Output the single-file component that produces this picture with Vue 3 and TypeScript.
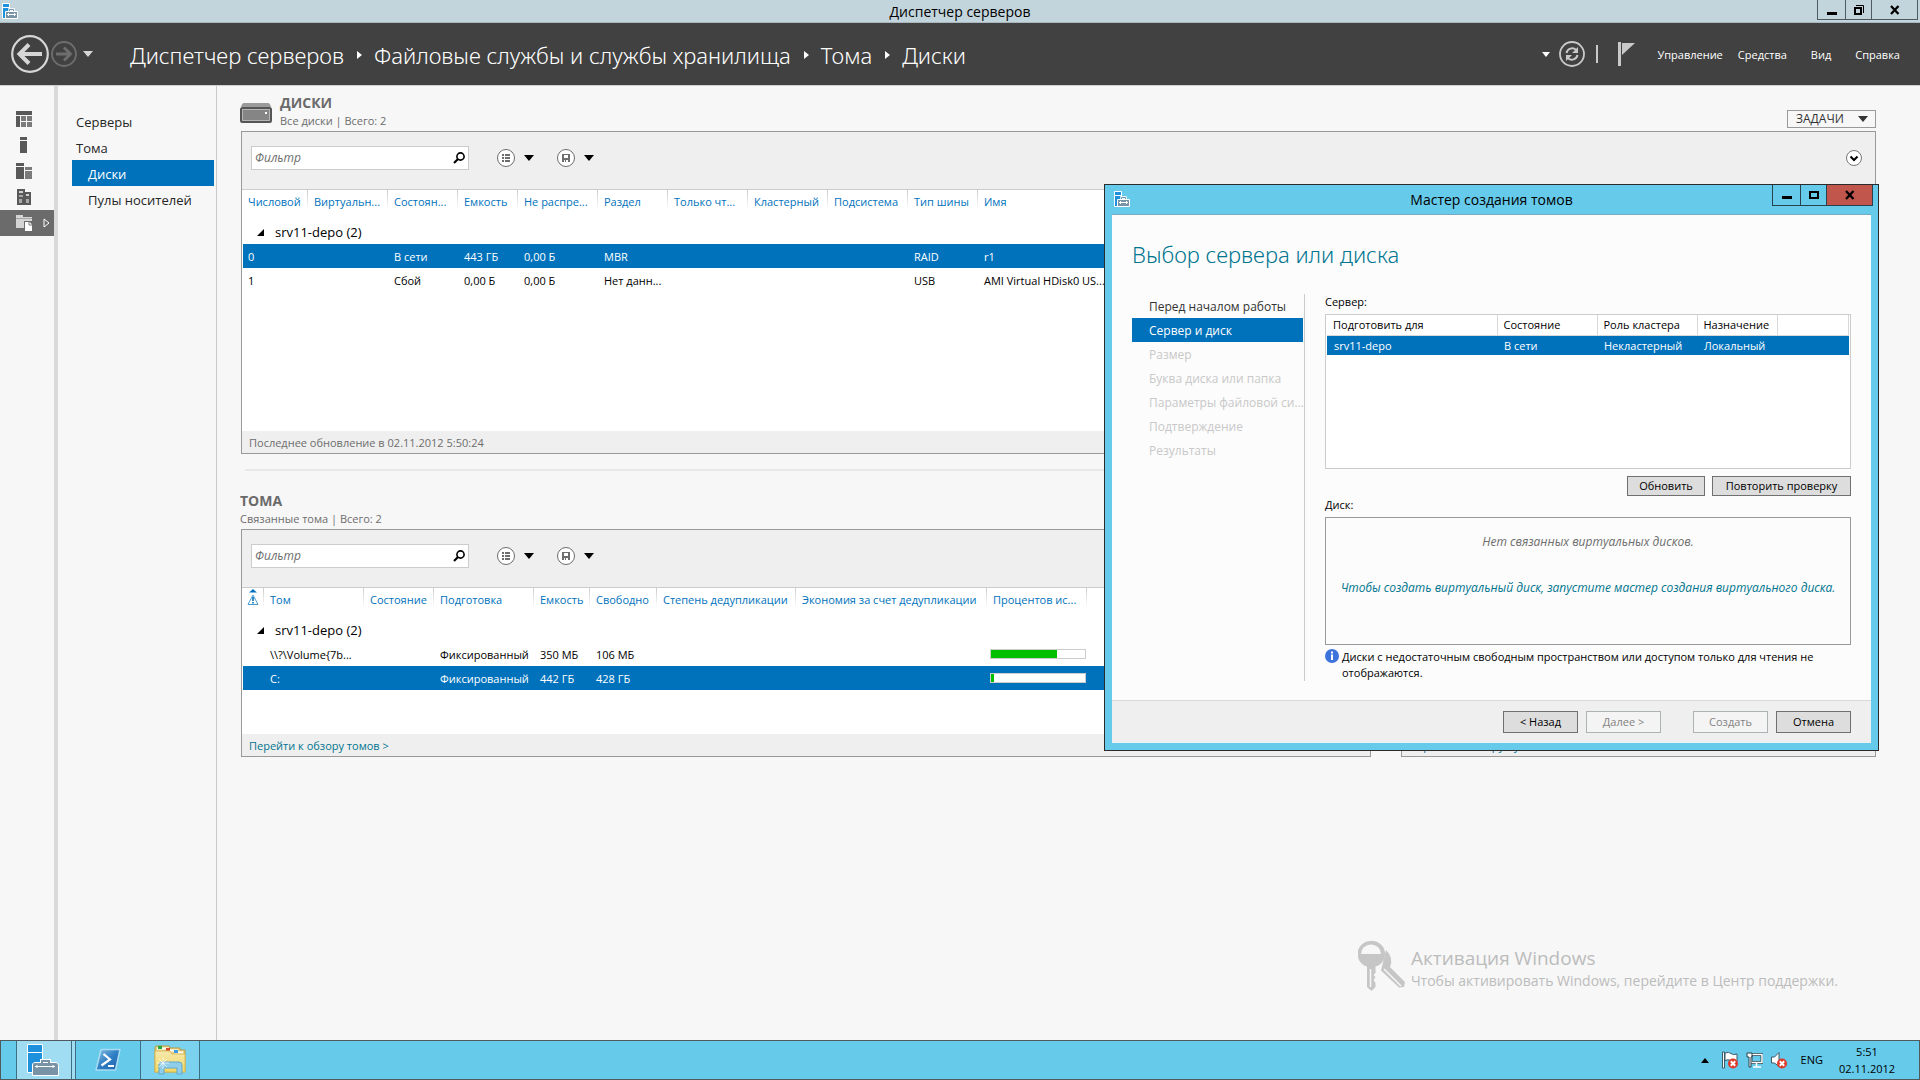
<script setup lang="ts">
interface Column {
  label: string
  width?: number
  warn?: boolean
}

const crumbs = ['Диспетчер серверов', 'Файловые службы и службы хранилища', 'Тома', 'Диски']
const menus = ['Управление', 'Средства', 'Вид', 'Справка']

const diskColumns: Column[] = [
  { label: 'Числовой', width: 65 },
  { label: 'Виртуальн...', width: 80 },
  { label: 'Состоян...', width: 70 },
  { label: 'Емкость', width: 60 },
  { label: 'Не распре...', width: 80 },
  { label: 'Раздел', width: 70 },
  { label: 'Только чт...', width: 80 },
  { label: 'Кластерный', width: 80 },
  { label: 'Подсистема', width: 80 },
  { label: 'Тип шины', width: 70 },
  { label: 'Имя' },
]
const diskRows = [
  { selected: true, cells: ['0', '', 'В сети', '443 ГБ', '0,00 Б', 'MBR', '', '', '', 'RAID', 'r1'] },
  { selected: false, cells: ['1', '', 'Сбой', '0,00 Б', '0,00 Б', 'Нет данн...', '', '', '', 'USB', 'AMI Virtual HDisk0 US...'] },
]

const volumeColumns: Column[] = [
  { label: '', width: 21, warn: true },
  { label: 'Том', width: 100 },
  { label: 'Состояние', width: 70 },
  { label: 'Подготовка', width: 100 },
  { label: 'Емкость', width: 56 },
  { label: 'Свободно', width: 67 },
  { label: 'Степень дедупликации', width: 139 },
  { label: 'Экономия за счет дедупликации', width: 191 },
  { label: 'Процентов ис...', width: 100 },
  { label: '' },
]
const volumeRows = [
  { selected: false, used: 70, cells: ['', '\\\\?\\Volume{7b...', '', 'Фиксированный', '350 МБ', '106 МБ', '', ''] },
  { selected: true, used: 3, cells: ['', 'C:', '', 'Фиксированный', '442 ГБ', '428 ГБ', '', ''] },
]

const steps = [
  { label: 'Перед началом работы', state: 'done' },
  { label: 'Сервер и диск', state: 'current' },
  { label: 'Размер', state: 'off' },
  { label: 'Буква диска или папка', state: 'off' },
  { label: 'Параметры файловой си...', state: 'off' },
  { label: 'Подтверждение', state: 'off' },
  { label: 'Результаты', state: 'off' },
]
</script>

<template>
  <div class="desktop">
    <header class="titlebar">
      <svg class="app-icon" width="16" height="16" viewBox="0 0 16 16" aria-hidden="true">
        <path d="M.5.5h7v15h-7z" fill="#1e90dc" stroke="#fff" />
        <path d="M.5 4.5h7" stroke="#fff" />
        <path d="M7.5 8V6.500h4V8" fill="none" stroke="#fff" stroke-width="2.500" />
        <path d="M3.500 8.500h12v7h-12z" fill="#7893a5" stroke="#fff" />
        <path d="M7.500 8V6.500h4V8" fill="none" stroke="#7893a5" />
        <path d="M5 11.500h9M6.500 10v3M12.500 10v3" stroke="#fff" />
      </svg>
      <span class="window-title">Диспетчер серверов</span>
      <div class="window-buttons">
        <button class="wb min" aria-label="Свернуть"><svg width="12" height="12" viewBox="0 0 12 12"><path d="M1 8h10v3H1z" /></svg></button>
        <button class="wb max" aria-label="Восстановить"><svg width="12" height="12" viewBox="0 0 12 12"><path d="M2 4h6v6H2z" fill="none" stroke="#000" stroke-width="2" /><path d="M3 1.500h7.500V9" fill="none" stroke="#000" /></svg></button>
        <button class="wb close" aria-label="Закрыть"><svg width="12" height="12" viewBox="0 0 12 12"><path d="M2 2l7.500 8M9.500 2L2 10" stroke="#000" stroke-width="2.300" /></svg></button>
      </div>
    </header>

    <nav class="band" aria-label="Навигация">
      <button class="plain" aria-label="Назад">
        <svg width="38" height="38" viewBox="0 0 38 38"><circle cx="19" cy="19" r="17.800" fill="none" stroke="#d6d6d6" stroke-width="2.200" /><path d="M31 19H9M18 9.500L8.500 19l9.500 9.500" fill="none" stroke="#d6d6d6" stroke-width="4" /></svg>
      </button>
      <button class="plain forward" aria-label="Вперед">
        <svg width="26" height="26" viewBox="0 0 26 26"><circle cx="13" cy="13" r="12" fill="none" stroke="#6e6e6e" stroke-width="1.800" /><path d="M5 13h14M13 6.500l6.500 6.500-6.500 6.500" fill="none" stroke="#6e6e6e" stroke-width="2.800" /></svg>
      </button>
      <button class="plain recent" aria-label="Последние страницы">
        <svg width="10" height="6" viewBox="0 0 10 6"><path d="M0 0h10L5 6z" fill="#d6d6d6" /></svg>
      </button>
      <ol class="crumbs">
        <li v-for="(crumb, i) in crumbs" :key="crumb">
          <svg v-if="i" width="5" height="8" viewBox="0 0 5 8" aria-hidden="true"><path d="M0 0l5 4-5 4z" fill="#fff" /></svg>
          <a href="#">{{ crumb }}</a>
        </li>
      </ol>
      <button class="plain" aria-label="Параметры обновления">
        <svg width="8" height="5" viewBox="0 0 8 5"><path d="M0 0h8L4 5z" fill="#fff" /></svg>
      </button>
      <button class="plain refresh" aria-label="Обновить данные">
        <svg width="26" height="26" viewBox="0 0 26 26">
          <circle cx="13" cy="13" r="12" fill="none" stroke="#c9c9c9" stroke-width="1.800" />
          <path d="M7.500 12a5.800 5.800 0 0 1 9.500-3.200M18.500 14a5.800 5.800 0 0 1-9.500 3.200" fill="none" stroke="#c9c9c9" stroke-width="2" />
          <path d="M19 6v6h-6zM7 20v-6h6z" fill="#c9c9c9" />
        </svg>
      </button>
      <span class="bar"></span>
      <button class="plain flag" aria-label="Уведомления">
        <svg width="17" height="24" viewBox="0 0 17 24"><path d="M1.500 0v24" stroke="#c9c9c9" stroke-width="3" /><path d="M4 1h13L4 13z" fill="#c9c9c9" /></svg>
      </button>
      <div class="menus">
        <button v-for="menu in menus" :key="menu" class="plain menu">{{ menu }}</button>
      </div>
    </nav>

    <div class="body">
      <nav class="rail" aria-label="Роли">
        <a href="#" aria-label="Панель мониторинга"><svg width="16" height="16" viewBox="0 0 16 16"><path d="M0 0h16v4H0zM0 5h4v11H0z" fill="#595959" /><path d="M5 5h5v5H5zM11 5h5v5h-5zM5 11h5v5H5zM11 11h5v5h-5z" fill="#7b7b7b" /></svg></a>
        <a href="#" aria-label="Локальный сервер"><svg width="16" height="16" viewBox="0 0 16 16"><path d="M4 0h7v3H4zM4 4h7v12H4z" fill="#595959" /></svg></a>
        <a href="#" aria-label="Все серверы"><svg width="16" height="16" viewBox="0 0 16 16"><path d="M0 0h8v3H0zM0 4h8v12H0z" fill="#595959" /><path d="M9 4h7v3H9zM9 8h7v8H9z" fill="#7b7b7b" /></svg></a>
        <a href="#" aria-label="Службы"><svg width="16" height="16" viewBox="0 0 16 16"><path d="M1 0h8v3h6v13H1z" fill="#595959" /><path d="M3 2h4v2H3zM10 5h3v2h-3z" fill="#d0d0d0" /><path d="M3 6h4v2H3zM3 10h3v4H3zM10 10h3v4h-3z" fill="#a8a8a8" /></svg></a>
        <a href="#" class="active" aria-label="Файловые службы и службы хранилища">
          <svg width="16" height="16" viewBox="0 0 16 16"><path d="M0 0h7v2h9v4H8v7H0z" fill="#d4d4d4" /><path d="M0 3.500h16" stroke="#a5a5a5" /><path d="M9 7h4.500L16 9.500V16H9z" fill="#fff" /><path d="M13 7v3h3" fill="none" stroke="#777" /></svg>
          <svg class="expand" width="7" height="10" viewBox="0 0 7 10"><path d="M1 1l5 4-5 4z" fill="none" stroke="#fff" /></svg>
        </a>
      </nav>
      <nav class="pages" aria-label="Разделы">
        <a href="#">Серверы</a>
        <a href="#">Тома</a>
        <a href="#" class="sub current">Диски</a>
        <a href="#" class="sub">Пулы носителей</a>
      </nav>

      <main class="content">
        <section>
          <div class="tile-head">
            <svg width="32" height="20" viewBox="0 0 32 20" aria-hidden="true"><path d="M4 0h24q2 0 3 4H1q1-4 3-4z" fill="#9a9a9a" /><rect x="1" y="5" width="30" height="14" rx="1.500" fill="#b5b5b5" stroke="#555" stroke-width="2" /><path d="M3 7h26v10H3z" fill="#858585" /><path d="M25 9h2v2h-2z" fill="#fff" /></svg>
            <div class="tile-names">
              <h2>ДИСКИ</h2>
              <p>Все диски | Всего: 2</p>
            </div>
            <button class="tasks">ЗАДАЧИ<svg width="10" height="6" viewBox="0 0 10 6"><path d="M0 0h10L5 6z" fill="#333" /></svg></button>
          </div>
          <div class="panel">
            <div class="toolbar">
              <div class="filter">
                <input type="text" placeholder="Фильтр" aria-label="Фильтр дисков" />
                <svg width="12" height="12" viewBox="0 0 12 12" aria-hidden="true"><circle cx="7.500" cy="4.500" r="3.600" fill="none" stroke="#000" stroke-width="1.600" /><path d="M5 7L1 11" stroke="#000" stroke-width="2.200" /></svg>
              </div>
              <button class="plain tool" aria-label="Критерии"><svg width="20" height="20" viewBox="0 0 20 20"><circle cx="10" cy="10" r="8.500" fill="#fff" stroke="#6d6d6d" /><path d="M6 6h2v2H6zM9 6h5v2H9zM6 9h2v2H6zM9 9h5v2H9zM6 12h2v2H6zM9 12h5v2H9z" fill="#6d6d6d" /></svg><svg width="10" height="6" viewBox="0 0 10 6"><path d="M0 0h10L5 6z" /></svg></button>
              <button class="plain tool" aria-label="Сохраненные запросы"><svg width="20" height="20" viewBox="0 0 20 20"><circle cx="10" cy="10" r="8.500" fill="#fff" stroke="#6d6d6d" /><path d="M6 6h8v8H6z" fill="#6d6d6d" /><path d="M8 7h4v3H8zM8 12h1v2H8zM10 12h2v2h-2z" fill="#fff" /></svg><svg width="10" height="6" viewBox="0 0 10 6"><path d="M0 0h10L5 6z" /></svg></button>
              <button class="plain collapse" aria-label="Развернуть критерии"><svg width="18" height="18" viewBox="0 0 18 18"><circle cx="9" cy="9" r="7.500" fill="#fff" stroke="#777" /><path d="M5.500 7.500L9 11l3.500-3.500" fill="none" stroke="#000" stroke-width="2" /></svg></button>
            </div>
            <div class="grid-area tall">
              <table class="grid">
                <colgroup><col v-for="col in diskColumns" :key="col.label" :style="col.width ? { width: col.width + 'px' } : {}" /></colgroup>
                <thead><tr><th v-for="col in diskColumns" :key="col.label" scope="col">{{ col.label }}</th></tr></thead>
                <tbody>
                  <tr class="group"><th colspan="11" scope="rowgroup"><svg width="7" height="7" viewBox="0 0 7 7" aria-hidden="true"><path d="M7 0v7H0z" /></svg>srv11-depo (2)</th></tr>
                  <tr v-for="row in diskRows" :key="row.cells[0]" :class="{ selected: row.selected }"><td v-for="(cell, i) in row.cells" :key="i">{{ cell }}</td></tr>
                </tbody>
              </table>
            </div>
            <p class="panel-foot">Последнее обновление в 02.11.2012 5:50:24</p>
          </div>
        </section>

        <hr />

        <div class="tiles">
          <section>
            <div class="tile-names">
              <h2>ТОМА</h2>
              <p>Связанные тома | Всего: 2</p>
            </div>
            <div class="panel">
              <div class="toolbar">
                <div class="filter">
                  <input type="text" placeholder="Фильтр" aria-label="Фильтр томов" />
                  <svg width="12" height="12" viewBox="0 0 12 12" aria-hidden="true"><circle cx="7.500" cy="4.500" r="3.600" fill="none" stroke="#000" stroke-width="1.600" /><path d="M5 7L1 11" stroke="#000" stroke-width="2.200" /></svg>
                </div>
                <button class="plain tool" aria-label="Критерии"><svg width="20" height="20" viewBox="0 0 20 20"><circle cx="10" cy="10" r="8.500" fill="#fff" stroke="#6d6d6d" /><path d="M6 6h2v2H6zM9 6h5v2H9zM6 9h2v2H6zM9 9h5v2H9zM6 12h2v2H6zM9 12h5v2H9z" fill="#6d6d6d" /></svg><svg width="10" height="6" viewBox="0 0 10 6"><path d="M0 0h10L5 6z" /></svg></button>
                <button class="plain tool" aria-label="Сохраненные запросы"><svg width="20" height="20" viewBox="0 0 20 20"><circle cx="10" cy="10" r="8.500" fill="#fff" stroke="#6d6d6d" /><path d="M6 6h8v8H6z" fill="#6d6d6d" /><path d="M8 7h4v3H8zM8 12h1v2H8zM10 12h2v2h-2z" fill="#fff" /></svg><svg width="10" height="6" viewBox="0 0 10 6"><path d="M0 0h10L5 6z" /></svg></button>
              </div>
              <div class="grid-area">
                <table class="grid">
                  <colgroup><col v-for="(col, i) in volumeColumns" :key="i" :style="col.width ? { width: col.width + 'px' } : {}" /></colgroup>
                  <thead>
                    <tr>
                      <th v-for="(col, i) in volumeColumns" :key="i" scope="col" :class="{ warn: col.warn }">
                        <svg v-if="col.warn" width="12" height="16" viewBox="0 0 12 16" role="img" aria-label="Предупреждения"><path d="M6 0l4 3.500H2z" fill="#0072bc" /><path d="M6 6l5 9.500H1z" fill="none" stroke="#4a9ad0" /><path d="M6 8v4M6 13v1.500" stroke="#0072bc" stroke-width="1.600" /></svg>
                        <template v-else>{{ col.label }}</template>
                      </th>
                    </tr>
                  </thead>
                  <tbody>
                    <tr class="group"><th colspan="10" scope="rowgroup"><svg width="7" height="7" viewBox="0 0 7 7" aria-hidden="true"><path d="M7 0v7H0z" /></svg>srv11-depo (2)</th></tr>
                    <tr v-for="row in volumeRows" :key="row.cells[1]" :class="{ selected: row.selected }">
                      <td v-for="(cell, i) in row.cells" :key="i">{{ cell }}</td>
                      <td class="usage"><div class="meter"><div :style="{ width: row.used + '%' }"></div></div></td>
                      <td></td>
                    </tr>
                  </tbody>
                </table>
              </div>
              <p class="panel-foot"><a href="#">Перейти к обзору томов &gt;</a></p>
            </div>
          </section>
          <section class="pool">
            <div class="panel">
              <div class="grid-area"></div>
              <p class="panel-foot"><a href="#">Перейти к обзору пулов носителей &gt;</a></p>
            </div>
          </section>
        </div>
      </main>
    </div>

    <footer class="taskbar">
      <button class="task running-focus" aria-label="Диспетчер серверов">
        <svg width="32" height="32" viewBox="0 0 32 32"><path d="M.500.500h15v28H.500z" fill="#1e90dc" stroke="#fff" /><path d="M0 8.500h16" stroke="#fff" /><path d="M15 20v-3h7v3" fill="none" stroke="#fff" stroke-width="4" /><path d="M7 18.500h22q2.500 0 2.500 3V31.500H5.500V20z" fill="#7893a5" stroke="#fff" /><path d="M15 19v-2h7v2" fill="none" stroke="#7893a5" stroke-width="2" /><path d="M8 22.500h20M10 21v3M26 21v3" stroke="#fff" /></svg>
      </button>
      <button class="task shell" aria-label="Windows PowerShell">
        <svg width="28" height="24" viewBox="0 0 28 24">
          <defs><linearGradient id="ps" x1="0" y1="0" x2="1" y2="1"><stop offset="0" stop-color="#8cc3e6" /><stop offset=".5" stop-color="#2f7fc4" /><stop offset="1" stop-color="#1f5fae" /></linearGradient></defs>
          <path d="M7 1.500h19L21.500 22H2z" fill="url(#ps)" stroke="#a8dcf2" stroke-width="1.500" stroke-linejoin="round" /><path d="M9.500 6l6.500 5.500L7.500 17.500M14 18h6" fill="none" stroke="#fff" stroke-width="2.200" />
        </svg>
      </button>
      <button class="task running" aria-label="Проводник">
        <svg width="32" height="30" viewBox="0 0 32 30">
          <defs><linearGradient id="fo" x1="0" y1="0" x2="0" y2="1"><stop offset="0" stop-color="#f5e9b0" /><stop offset="1" stop-color="#f2d75f" /></linearGradient></defs>
          <path d="M1 27V3q0-2 2-2h12l1 2h10v2h5v22z" fill="#e8d48a" stroke="#b99a3c" />
          <path d="M3 2.500h12v2H3zM12 4.500h12v2H12zM20 6.500h9v2h-9z" fill="#fff" /><path d="M4 1h4v3H4z" fill="#1faa3a" /><path d="M12 3h4v3h-4z" fill="#d4482e" /><path d="M20 5h4v3h-4z" fill="#3a9be0" />
          <path d="M1 6h15l2 3h13v18H1z" fill="url(#fo)" stroke="#d9bb57" />
          <path d="M5 29V20q0-3 3-3h17q3 0 3 3v9h-5v-6H10v6z" fill="#8fcdea" stroke="#5fa9d0" />
          <path d="M9 12v12M3 18h12M5 14l8 8M13 14l-8 8" stroke="#fff" stroke-width=".7" />
        </svg>
      </button>
      <div class="tray">
        <svg width="8" height="5" viewBox="0 0 8 5" aria-hidden="true"><path d="M4 0l4 5H0z" /></svg>
        <svg width="16" height="18" viewBox="0 0 16 18" role="img" aria-label="Центр поддержки"><path d="M.500 1h2v16h-2z" fill="#fff" stroke="#3c5a68" /><path d="M3 2q4-1.500 6 .5t6 .5v7q-3 1-6-.5T3 9.500z" fill="#fff" stroke="#3c5a68" /><circle cx="11" cy="12.500" r="5" fill="#dc3a2a" /><path d="M8.800 10.300l4.400 4.400M13.200 10.300l-4.400 4.400" stroke="#fff" stroke-width="2" /></svg>
        <svg width="17" height="18" viewBox="0 0 17 18" role="img" aria-label="Сеть"><path d="M5 3.500h11v8H5z" fill="#66caea" stroke="#27424e" stroke-width="3" /><path d="M5 3.500h11v8H5zM10.500 12v4M7 16h8" fill="none" stroke="#fff" stroke-width="1.500" /><path d="M1 2h5v4H5v10H3V6H1z" fill="#fff" stroke="#27424e" /></svg>
        <svg width="16" height="18" viewBox="0 0 16 18" role="img" aria-label="Звук отключен"><path d="M.500 6h3L8 1.500v14L3.500 12h-3z" fill="#fff" stroke="#3c5a68" /><circle cx="11" cy="12.500" r="5" fill="#dc3a2a" /><path d="M8.800 10.300l4.400 4.400M13.200 10.300l-4.400 4.400" stroke="#fff" stroke-width="2" /></svg>
        <span class="lang">ENG</span>
        <time class="clock"><span>5:51</span><span>02.11.2012</span></time>
      </div>
    </footer>

    <aside class="activation">
      <svg width="48" height="50" viewBox="0 0 48 50" aria-hidden="true">
        <path d="M28 9q8 8 4 17l15 15-1 5-5 .5-18-17z" fill="#c6c6c6" /><path d="M26 28l17 17" stroke="#f7f7f7" stroke-width="1.500" />
        <circle cx="13" cy="13.500" r="13.500" fill="#f7f7f7" /><path d="M13 0a13 13 0 0 1 4.500 25.500V32l-2 2 2 2-2 3 2 3V46l-4 4-4.500-4V25.500A13 13 0 0 1 13 0z" fill="#c6c6c6" />
        <path d="M3 13a10 9.500 0 0 1 20 0z" fill="#f7f7f7" /><path d="M12.500 28v18" stroke="#f7f7f7" stroke-width="1.500" />
      </svg>
      <div>
        <p class="activation-title">Активация Windows</p>
        <p>Чтобы активировать Windows, перейдите в Центр поддержки.</p>
      </div>
    </aside>

    <div class="dialog" role="dialog" aria-labelledby="wizard-title">
      <div class="dialog-bar">
        <svg class="app-icon" width="16" height="16" viewBox="0 0 16 16" aria-hidden="true">
          <path d="M.500.500h7v15h-7z" fill="#1e90dc" stroke="#fff" />
          <path d="M.500 4.500h7" stroke="#fff" />
          <path d="M7.500 8V6.500h4V8" fill="none" stroke="#fff" stroke-width="2.500" />
          <path d="M3.500 8.500h12v7h-12z" fill="#7893a5" stroke="#fff" />
          <path d="M7.500 8V6.500h4V8" fill="none" stroke="#7893a5" />
          <path d="M5 11.500h9M6.500 10v3M12.500 10v3" stroke="#fff" />
        </svg>
        <span id="wizard-title" class="window-title">Мастер создания томов</span>
        <div class="window-buttons">
          <button class="wb min" aria-label="Свернуть"><svg width="12" height="12" viewBox="0 0 12 12"><path d="M1 7h10v3H1z" /></svg></button>
          <button class="wb max" aria-label="Развернуть"><svg width="12" height="12" viewBox="0 0 12 12"><path d="M2 3h8v6H2z" fill="none" stroke="#000" stroke-width="2" /></svg></button>
          <button class="wb close" aria-label="Закрыть"><svg width="12" height="12" viewBox="0 0 12 12"><path d="M2 2l7.500 8M9.500 2L2 10" stroke="#000" stroke-width="2.300" /></svg></button>
        </div>
      </div>
      <div class="dialog-body">
        <h1>Выбор сервера или диска</h1>
        <div class="wizard">
          <ol class="steps">
            <li v-for="step in steps" :key="step.label" :class="step.state">{{ step.label }}</li>
          </ol>
          <div class="form">
            <p id="server-label" class="caption">Сервер:</p>
            <div class="server-box">
              <table class="servers" aria-labelledby="server-label">
                <colgroup><col class="c-name" /><col class="c-mid" /><col class="c-mid" /><col class="c-dest" /><col /></colgroup>
                <thead><tr><th scope="col">Подготовить для</th><th scope="col">Состояние</th><th scope="col">Роль кластера</th><th scope="col">Назначение</th><th></th></tr></thead>
                <tbody><tr><td>srv11-depo</td><td>В сети</td><td>Некластерный</td><td>Локальный</td><td></td></tr></tbody>
              </table>
            </div>
            <div class="server-actions">
              <button class="push refresh-list">Обновить</button>
              <button class="push rescan">Повторить проверку</button>
            </div>
            <p class="caption">Диск:</p>
            <div class="disk-box">
              <p>Нет связанных виртуальных дисков.</p>
              <a href="#">Чтобы создать виртуальный диск, запустите мастер создания виртуального диска.</a>
            </div>
            <div class="note">
              <svg width="14" height="14" viewBox="0 0 14 14" aria-hidden="true"><circle cx="7" cy="7" r="7" fill="#3f73dc" /><path d="M6 2.500h2v2H6zM6 5.500h2V11H6z" fill="#fff" /></svg>
              <p>Диски с недостаточным свободным пространством или доступом только для чтения не отображаются.</p>
            </div>
          </div>
        </div>
      </div>
      <div class="dialog-foot">
        <button class="push">&lt; Назад</button>
        <button class="push" disabled>Далее &gt;</button>
        <button class="push create" disabled>Создать</button>
        <button class="push">Отмена</button>
      </div>
    </div>
  </div>
</template>

<style>
body {
  margin: 0;
  background: #f7f7f7;
}
</style>

<style scoped>
* {
  box-sizing: border-box;
}
.desktop {
  position: relative;
  display: flex;
  flex-direction: column;
  min-height: 100vh;
  background: #f7f7f7;
  color: #000;
  font: 11px/16px "Open Sans", "Noto Sans", sans-serif;
}
svg {
  display: block;
  flex: none;
}
p,
h1,
h2,
ol {
  margin: 0;
  padding: 0;
  list-style: none;
}
a {
  color: inherit;
  text-decoration: none;
}
button,
input {
  font: inherit;
  color: inherit;
}
.plain {
  display: flex;
  align-items: center;
  padding: 0;
  border: 0;
  background: none;
}

/* window chrome */
.titlebar,
.dialog-bar {
  display: grid;
  grid-template-columns: 1fr auto 1fr;
}
.titlebar {
  height: 23px;
  padding: 0 2px;
  background: #c3d5dc;
  border-bottom: 1px solid #a9b8be;
}
.app-icon {
  margin-top: 3px;
}
.window-title {
  font-size: 14px;
  line-height: 23px;
}
.window-buttons {
  display: flex;
  justify-self: end;
  height: 20px;
  border: 1px solid #4f5a60;
  border-top: 0;
}
.wb {
  display: flex;
  align-items: center;
  justify-content: center;
  padding: 0;
  border: 0;
  background: none;
}
.min {
  width: 27px;
}
.max {
  width: 27px;
  border: solid #4f5a60;
  border-width: 0 1px;
}
.close {
  width: 45px;
}

/* dark navigation band */
.band {
  display: flex;
  align-items: center;
  height: 63px;
  padding: 0 20px 0 11px;
  background: #414141;
  border-bottom: 1px solid #d0d0d0;
  color: #fff;
}
.forward {
  margin-left: 2px;
}
.recent {
  margin-left: 6px;
}
.crumbs {
  display: flex;
  flex: 1;
  margin-left: 37px;
  padding-top: 2px;
  font: 300 22px/32px "Noto Sans", "Open Sans", sans-serif;
}
.crumbs li {
  display: flex;
  align-items: center;
}
.crumbs svg {
  margin: 0 12px 0 13px;
}
.refresh {
  margin-left: 9px;
}
.bar {
  width: 2px;
  height: 18px;
  margin: 0 20px 0 11px;
  background: #c9c9c9;
}
.menus {
  display: flex;
  gap: 15px;
  margin-left: 22px;
  padding-top: 2px;
}
.menu:nth-child(3) {
  padding: 0 9px;
}

/* side navigation */
.body {
  display: flex;
  flex: 1;
}
.rail {
  width: 58px;
  padding-top: 20px;
  border-right: 4px solid #d9d9d9;
}
.rail a {
  display: flex;
  align-items: center;
  height: 26px;
  padding-left: 16px;
}
.rail .active {
  background: #6b6b6b;
}
.expand {
  margin-left: 11px;
}
.pages {
  width: 159px;
  padding: 22px 2px 0 14px;
  border-right: 1px solid #c8c8c8;
  color: #262626;
  font-size: 13px;
  line-height: 24px;
}
.pages a {
  display: block;
  padding: 2px 0 0 4px;
}
.pages .sub {
  padding-left: 16px;
}
.pages .current {
  background: #0072bc;
  color: #fff;
}

/* tiles */
.content {
  flex: 1;
  min-width: 0;
  padding: 8px 44px 0 23px;
}
.tile-head {
  display: flex;
  gap: 8px;
}
.tile-head > svg {
  margin-top: 9px;
}
.tile-names {
  flex: 1;
  padding-bottom: 1px;
  color: #6d6d6d;
  line-height: 18px;
}
h2 {
  color: #6a6a6a;
  font-size: 14px;
  font-weight: 700;
  line-height: 18px;
}
.tasks {
  display: flex;
  align-items: center;
  align-self: flex-end;
  justify-content: space-between;
  width: 89px;
  height: 18px;
  margin-bottom: 3px;
  padding: 0 7px 0 8px;
  border: 1px solid #999;
  background: #f7f7f7;
  color: #333;
  font-size: 12px;
}
.panel {
  margin-left: 1px;
  border: 1px solid #999;
  background: #fff;
}
.toolbar {
  display: flex;
  align-items: center;
  height: 58px;
  padding: 0 12px 5px 9px;
  background: #efefef;
  border-bottom: 1px solid #ccc;
}
.filter {
  display: flex;
  align-items: center;
  width: 218px;
  height: 24px;
  padding-right: 3px;
  border: 1px solid #ccc;
  background: #fff;
}
.filter input {
  flex: 1;
  min-width: 0;
  padding: 0 3px;
  border: 0;
  outline: 0;
  background: none;
  font-size: 12px;
  font-style: italic;
}
.filter input::placeholder {
  color: #6d6d6d;
}
.tool {
  gap: 8px;
  margin-left: 22px;
}
.filter + .tool {
  margin-left: 27px;
}
.collapse {
  margin-left: auto;
}
.grid-area {
  min-height: 146px;
  padding-left: 1px;
}
.tall {
  min-height: 241px;
}
.grid {
  width: 100%;
  table-layout: fixed;
  border-collapse: collapse;
}
.grid th,
.grid td {
  height: 24px;
  padding: 0 0 0 6px;
  overflow: hidden;
  text-align: left;
  white-space: nowrap;
}
.grid td {
  padding-top: 2px;
}
.grid th:first-child,
.grid td:first-child {
  padding-left: 5px;
}
.grid thead th {
  height: 30px;
  padding-bottom: 6px;
  background: linear-gradient(#ccc, #fff) right top / 1px 20px no-repeat;
  color: #0072bc;
  font-weight: 400;
}
.grid thead th:last-child {
  background: none;
}
.grid thead .warn:first-child {
  padding: 0 0 12px 4px;
}
.grid .group th:first-child {
  padding-left: 14px;
  font-size: 13px;
  font-weight: 400;
}
.group svg {
  display: inline-block;
  margin-right: 11px;
  vertical-align: 1px;
}
.grid .selected {
  background: #0072bc;
  color: #fff;
}
.grid .usage {
  padding: 0 0 0 3px;
}
.meter {
  width: 96px;
  height: 10px;
  border: 1px solid #ccc;
  background: #fff;
}
.meter div {
  height: 100%;
  background: #00c000;
}
.panel-foot {
  height: 22px;
  padding: 0 7px;
  background: #efefef;
  color: #6d6d6d;
  line-height: 24px;
}
.panel-foot a {
  color: #00758f;
}
hr {
  height: 2px;
  margin: 15px 0 21px 5px;
  border: 0;
  background: #e8e8e8;
}
.tiles {
  display: grid;
  grid-template-columns: 1131fr 476fr;
  gap: 29px;
}
.pool {
  display: flex;
  flex-direction: column;
  padding-top: 37px;
}
.pool .panel {
  display: flex;
  flex: 1;
  flex-direction: column;
}
.pool .grid-area {
  flex: 1;
}

/* taskbar */
.taskbar {
  display: flex;
  height: 40px;
  padding-left: 15px;
  background: #66caea;
  border: 1px solid #50595d;
}
.task {
  display: flex;
  align-items: center;
  justify-content: center;
  width: 60px;
  padding: 0;
  border: solid #3d6f82;
  border-width: 0 1px;
  background: none;
}
.running-focus {
  padding-right: 6px;
  background: linear-gradient(90deg, #a0ddf2 54px, #3d6f82 54px, #3d6f82 55px, #a0ddf2 55px);
}
.shell {
  width: 64px;
  border: 0;
}
.running {
  background: #7ad2ee;
}
.tray {
  display: flex;
  align-items: center;
  gap: 8px;
  margin-left: auto;
  padding-right: 24px;
}
.tray > svg:first-child {
  margin-right: 5px;
}
.lang {
  margin-left: 6px;
}
.clock {
  display: flex;
  flex-direction: column;
  width: 56px;
  margin-left: 8px;
  line-height: 17px;
  text-align: center;
}

/* activation notice lies over the desktop */
.activation {
  position: absolute;
  right: 82px;
  bottom: 88px;
  display: flex;
  gap: 5px;
  color: #bcbcbc;
  font-size: 14px;
  line-height: 22px;
}
.activation-title {
  margin-top: 5px;
  font-size: 19px;
  line-height: 24px;
}

/* wizard window */
.dialog {
  position: absolute;
  top: 184px;
  right: 41px;
  width: 775px;
  padding: 0 7px 7px;
  border: 1px solid #2b2b2b;
  background: #66caea;
}
.dialog-bar {
  height: 29px;
}
.dialog .app-icon {
  margin: 6px 0 0 2px;
}
.dialog .window-title {
  line-height: 30px;
}
.dialog .window-buttons {
  height: 21px;
  margin-right: -2px;
  border-color: #27424e;
}
.dialog .max {
  border-color: #27424e;
}
.dialog .close {
  background: #c1564c;
}
.dialog-body {
  padding: 23px 20px 19px;
  border-top: 1px solid #7aa9c2;
  background: #fcfcfc;
}
h1 {
  color: #00758f;
  font: 300 22px/32px "Noto Sans", "Open Sans", sans-serif;
}
.wizard {
  display: flex;
  margin-top: 24px;
}
.steps {
  flex: none;
  width: 173px;
  border-right: 1px solid #ccc;
  font-size: 12px;
  line-height: 22px;
}
.steps li {
  margin-right: 1px;
  padding: 2px 0 0 17px;
  white-space: nowrap;
}
.done {
  color: #333;
}
.current {
  background: #0072bc;
  color: #fff;
}
.off {
  color: #c8c8c8;
}
.form {
  flex: 1;
  min-width: 0;
  margin-left: 20px;
}
.server-box {
  height: 155px;
  margin-top: 4px;
  padding: 0 1px;
  border: 1px solid #ccc;
  background: #fff;
}
.servers {
  width: 100%;
  table-layout: fixed;
  border-collapse: collapse;
}
.servers th,
.servers td {
  height: 20px;
  padding: 0 0 0 6px;
  text-align: left;
  white-space: nowrap;
}
.servers th {
  border-right: 1px solid #d9d9d9;
  border-bottom: 1px solid #d9d9d9;
  font-weight: 400;
}
.servers td {
  padding: 2px 0 0 7px;
  background: #0072bc;
  color: #fff;
}
.c-name {
  width: 170px;
}
.c-mid {
  width: 100px;
}
.c-dest {
  width: 80px;
}
.server-actions {
  display: flex;
  justify-content: flex-end;
  gap: 7px;
  margin: 7px 0 1px;
}
.push {
  width: 75px;
  height: 22px;
  padding: 0;
  border: 1px solid #707070;
  background: #ddd;
  line-height: 18px;
}
.push:disabled {
  border-color: #adb2b5;
  background: #f4f4f4;
  color: #838383;
}
.refresh-list,
.rescan {
  height: 20px;
}
.refresh-list {
  width: 78px;
}
.rescan {
  width: 139px;
}
.disk-box {
  display: flex;
  flex-direction: column;
  align-items: center;
  gap: 30px;
  height: 128px;
  margin-top: 4px;
  padding-top: 16px;
  border: 1px solid #999;
  color: #6d6d6d;
  font-size: 12px;
  font-style: italic;
}
.disk-box a {
  color: #00758f;
}
.note {
  display: flex;
  gap: 3px;
  margin-top: 4px;
}
.dialog-foot {
  display: flex;
  justify-content: flex-end;
  gap: 8px;
  padding: 10px 20px;
  border-top: 1px solid #d9d9d9;
  background: #efefef;
}
.create {
  margin-left: 24px;
}
</style>
